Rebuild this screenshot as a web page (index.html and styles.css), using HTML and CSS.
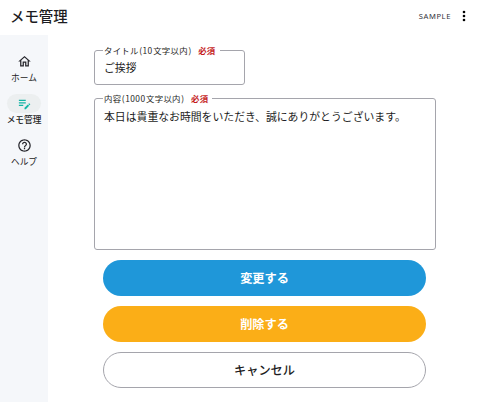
FILE: index.html
```html
<!DOCTYPE html>
<html lang="ja">
<head>
<meta charset="utf-8">
<title>メモ管理</title>
<link rel="stylesheet" href="styles.css">
</head>
<body>
<header class="topbar">
  <h1 class="title">メモ管理</h1>
  <span class="user">SAMPLE</span>
  <svg class="more" viewBox="0 0 4 12"><circle cx="2" cy="2" r="1.3"/><circle cx="2" cy="6" r="1.3"/><circle cx="2" cy="10" r="1.3"/></svg>
</header>
<div class="layout">
  <nav class="rail">
    <a class="item">
      <span class="pill"><svg class="icon" viewBox="0 0 24 24"><path d="M12 5.69l5 4.5V18h-2v-6H9v6H7v-7.81l5-4.5M12 3L2 12h3v8h6v-6h2v6h6v-8h3L12 3z"/></svg></span>
      <span class="label">ホーム</span>
    </a>
    <a class="item active">
      <span class="pill"><svg class="icon" viewBox="0 0 24 24"><path d="M3 10h11v2H3v-2zm0-2h11V6H3v2zm0 8h7v-2H3v2zm15.01-3.13l.71-.71c.39-.39 1.02-.39 1.41 0l.71.71c.39.39.39 1.02 0 1.41l-.71.71-2.12-2.12zm-.71.71l-5.3 5.3V21h2.12l5.3-5.3-2.12-2.12z"/></svg></span>
      <span class="label">メモ管理</span>
    </a>
    <a class="item">
      <span class="pill"><svg class="icon" viewBox="0 0 24 24"><path d="M11 18h2v-2h-2v2zm1-16C6.48 2 2 6.48 2 12s4.48 10 10 10 10-4.48 10-10S17.52 2 12 2zm0 18c-4.41 0-8-3.59-8-8s3.59-8 8-8 8 3.59 8 8-3.59 8-8 8zm0-14c-2.21 0-4 1.79-4 4h2c0-1.1.9-2 2-2s2 .9 2 2c0 2-3 1.75-3 5h2c0-2.25 3-2.5 3-5 0-2.21-1.79-4-4-4z"/></svg></span>
      <span class="label">ヘルプ</span>
    </a>
  </nav>
  <main class="main">
    <fieldset class="field short">
      <legend>タイトル<span class="num">(10</span>文字以内<span class="num">)</span><b class="required">必須</b></legend>
      <div class="value">ご挨拶</div>
    </fieldset>
    <fieldset class="field long">
      <legend>内容<span class="num">(1000</span>文字以内<span class="num">)</span><b class="required">必須</b></legend>
      <div class="value">本日は貴重なお時間をいただき、誠にありがとうございます。</div>
    </fieldset>
    <div class="actions">
      <button class="btn update">変更する</button>
      <button class="btn delete">削除する</button>
      <button class="btn cancel">キャンセル</button>
    </div>
  </main>
</div>
</body>
</html>
```
FILE: styles.css
```css
* { box-sizing: border-box; }
body {
  margin: 0;
  height: 402px;
  overflow: hidden;
  background: #fff;
  color: #1c1c22;
  font-family: "Noto Sans CJK JP", sans-serif;
}
.topbar {
  display: flex;
  align-items: center;
  height: 35px;
  padding: 0 14px 3px 10px;
}
.title {
  margin: 0 auto 0 0;
  font-size: 14.4px;
  font-weight: 500;
  line-height: 20px;
}
.user {
  font-family: "Noto Sans", sans-serif;
  font-size: 7.6px;
  letter-spacing: .6px;
  margin-right: 11px;
  color: #33333b;
}
.more { width: 4px; height: 12px; }
.layout { display: flex; height: 367px; }
.rail {
  display: flex;
  flex-direction: column;
  gap: 10px;
  width: 48px;
  padding-top: 17px;
  background: #f5f7fa;
}
.item {
  display: flex;
  flex-direction: column;
  align-items: center;
  height: 32px;
}
.pill {
  display: flex;
  flex: none;
  align-items: center;
  justify-content: center;
  width: 34px;
  height: 19px;
  border-radius: 10px;
}
.icon { width: 15px; height: 15px; fill: #26262c; }
.label { font-size: 8.7px; line-height: 14px; white-space: nowrap; }
.active .pill { background: #eceff0; }
.active .icon { fill: #14b5a5; }
.active .label { font-weight: 500; }
.main { padding: 9px 0 0 46px; }
.field {
  display: block;
  min-width: 0;
  margin: 0;
  padding: 0 9px;
  border: 1px solid #a5a5ac;
  border-radius: 3px;
}
.field legend {
  height: 13px;
  padding: 0 4px 0 1px;
  margin-left: -1px;
  font-size: 8.4px;
  letter-spacing: .3px;
  line-height: 12px;
  white-space: nowrap;
}
.num { padding: 0 .5px; letter-spacing: .45px; }
.required { margin-left: 6px; color: #c41c1c; font-weight: 700; }
.value { font-size: 10.85px; line-height: 16px; white-space: nowrap; }
.short { width: 151px; height: 41px; }
.short .value { margin-top: 2px; }
.long { width: 342px; height: 158px; margin-top: 7px; }
.long legend { line-height: 13px; }
.long .value { margin-top: 3px; }
.actions {
  display: flex;
  flex-direction: column;
  gap: 10px;
  width: 323px;
  margin: 10px 0 0 9px;
}
.btn {
  height: 36px;
  padding: 0;
  border: 0;
  border-radius: 18px;
  font: 700 12.2px/18px "Noto Sans CJK JP", sans-serif;
  color: #fff;
}
.update { background: #1f97d9; }
.delete { background: #fbae17; }
.cancel { background: #fff; border: 1px solid #a5a5ac; color: #1c1c22; font-weight: 500; }
```
